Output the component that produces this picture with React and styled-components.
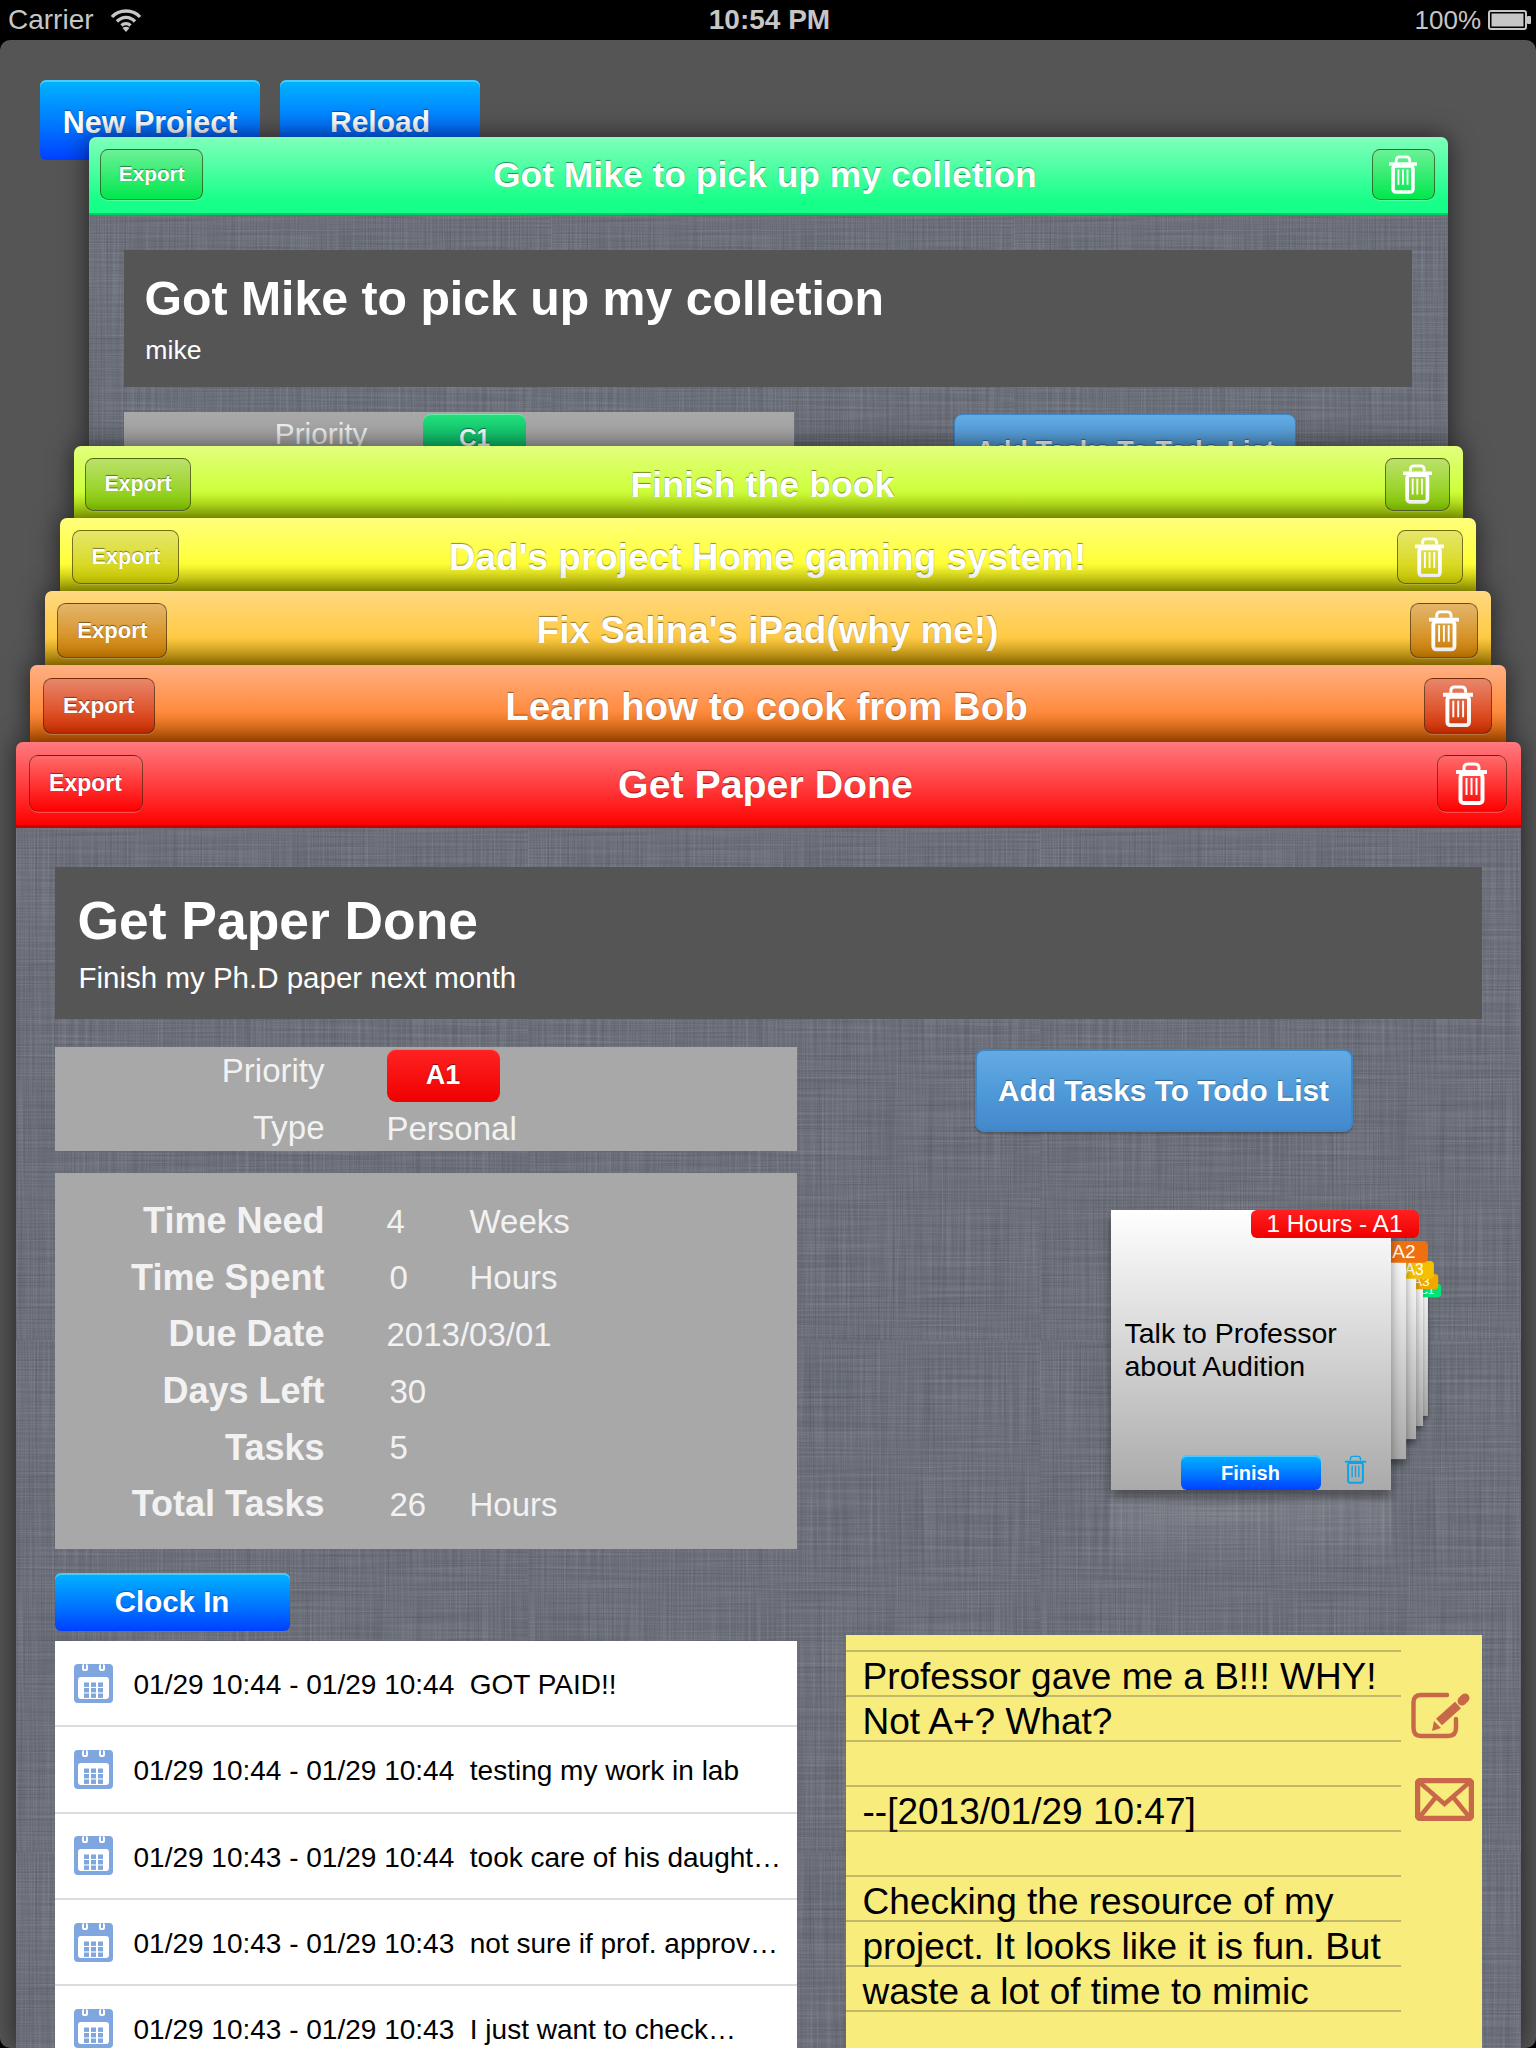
import React from "react";
import styled, { createGlobalStyle } from "styled-components";

const GlobalStyle = createGlobalStyle`
  html, body {
    margin: 0;
    height: 2048px;
    overflow: hidden;
    background: #000;
    font-family: "Liberation Sans", Arial, sans-serif;
  }
  * { box-sizing: border-box; }
`;

// textura de linho: ruido esticado nas duas direcoes
const threads = (freq, seed, rgb) =>
  `<filter id='f${seed}'><feTurbulence type='fractalNoise' baseFrequency='${freq}' numOctaves='2' seed='${seed}' stitchTiles='stitch'/><feColorMatrix values='0 0 0 0 ${rgb} 0 0 0 0 ${rgb} 0 0 0 0 ${rgb} 1.6 0 0 0 -0.62'/></filter><rect width='512' height='512' filter='url(#f${seed})' opacity='.12'/>`;
const linenSvg = `<svg xmlns='http://www.w3.org/2000/svg' width='512' height='512'>${threads(".008 .55", 3, 1)}${threads(".55 .008", 5, 1)}${threads(".008 .6", 7, 0)}${threads(".6 .008", 9, 0)}</svg>`;
const linen = `url("data:image/svg+xml,${encodeURIComponent(linenSvg)}"), #6a6e79`;

const blueButton = `
  background: linear-gradient(#00b4ff, #0078ff 55%, #0040ff);
  border: 0;
  border-radius: 6px;
  color: #fff;
  font-weight: bold;
  box-shadow: inset 0 2px 0 rgba(120, 220, 255, .6);
`;

// ---- barra de status
const StatusBar = styled.div`
  height: 40px;
  display: grid;
  grid-template-columns: 1fr auto 1fr;
  align-items: center;
  padding: 0 5px 0 8px;
  color: #c6c6c6;
  background: #000;
`;
const StatusLeft = styled.div`
  display: flex;
  align-items: center;
  gap: 16px;
  font-size: 28px;
`;
const StatusTime = styled.div`
  font-size: 28px;
  font-weight: bold;
`;
const StatusRight = styled.div`
  display: flex;
  justify-content: flex-end;
  align-items: center;
  gap: 7px;
  font-size: 26px;
`;

const Screen = styled.div`
  height: 2008px;
  background: #555;
  border-radius: 10px;
  overflow: hidden;
  display: flex;
  flex-direction: column;
`;
const Toolbar = styled.div`
  flex: none;
  height: 97px;
  padding: 40px 0 0 40px;
  display: flex;
  align-items: flex-start;
  gap: 20px;
`;
const ToolButton = styled.button`
  ${blueButton}
  width: ${(p) => p.$w}px;
  height: 80px;
  padding: 4px 0 0;
  font-family: inherit;
  font-size: ${(p) => p.$size}px;
  text-shadow: 0 -1px 1px rgba(0,0,0,.4);
`;

// ---- pilha de projetos
const Slot = styled.section`
  position: relative;
  flex: ${(p) => (p.$h ? "none" : "1")};
  height: ${(p) => (p.$h ? `${p.$h}px` : "auto")};
  min-height: 0;
  width: ${(p) => p.$w}px;
  margin: 0 auto;
  border-radius: 7px 7px 0 0;
  overflow: hidden;
  box-shadow: 0 0 26px rgba(0, 0, 0, .62);
`;
const SlotInner = styled.div`
  zoom: ${(p) => p.$zoom};
`;
const Header = styled.header`
  height: 86px;
  padding: 13px 14px 0 13px;
  display: grid;
  grid-template-columns: 1fr auto 1fr;
  align-items: start;
  background: ${(p) => p.$bg};
  border-bottom: 3px solid ${(p) => p.$line};
`;
const HeaderButton = styled.button`
  width: ${(p) => p.$w}px;
  height: 57px;
  justify-self: ${(p) => p.$side};
  padding: 0;
  display: flex;
  align-items: center;
  justify-content: center;
  border: 1.5px solid rgba(50, 40, 10, .6);
  border-radius: 9px;
  background: linear-gradient(rgba(255,255,255,.42), rgba(255,255,255,0)), ${(p) => p.$base};
  box-shadow: 0 1px 0 rgba(255,255,255,.25);
  color: #fff;
  font-family: inherit;
  font-size: 23px;
  font-weight: bold;
  text-shadow: 0 -1px 1px rgba(0,0,0,.45);
`;
const HeaderTitle = styled.h2`
  margin: 0;
  height: 57px;
  line-height: 59px;
  padding-right: ${(p) => p.$pad}px;
  font-size: ${(p) => p.$size}px;
  font-weight: bold;
  white-space: nowrap;
  color: #fff;
  text-shadow: 0 -1px 1px rgba(0,0,0,.45);
`;
const Body = styled.div`
  padding: 39px 39px 0;
  background: ${linen};
  min-height: 1400px;
`;
const TitlePanel = styled.div`
  height: 152px;
  background: #555;
  padding: 19px 23px 0;
  color: #fff;
`;
const BigTitle = styled.h1`
  margin: 0;
  font-size: 53.4px;
  line-height: 70px;
  font-weight: bold;
`;
const Subtitle = styled.div`
  padding: 4px 0 0 1px;
  font-size: 29.5px;
  line-height: 36px;
`;
const Columns = styled.div`
  margin-top: 28px;
  display: grid;
  grid-template-columns: 742px 1fr;
  column-gap: 49px;
`;
const LeftColumn = styled.div`
  display: flex;
  flex-direction: column;
`;
const RightColumn = styled.div`
  display: flex;
  flex-direction: column;
`;
const InfoPanel = styled.div`
  height: 103.5px;
  background: #a8a8a8;
  display: grid;
  grid-template-rows: 48px 46px;
  row-gap: 10px;
`;
const StatsPanel = styled.div`
  margin-top: 22px;
  height: 376.5px;
  padding-top: 20px;
  background: #a8a8a8;
  display: grid;
  grid-auto-rows: 56.6px;
`;
const FactRow = styled.div`
  display: grid;
  grid-template-columns: 270px 62px 83px 1fr;
  grid-template-rows: 100%;
  align-items: center;
  color: #f2f2f2;
  font-size: 33px;
  white-space: nowrap;
`;
const FactLabel = styled.div`
  text-align: right;
  padding-top: ${(p) => (p.$bold ? "1px" : "0")};
  font-size: ${(p) => (p.$bold ? "36px" : "33px")};
  font-weight: ${(p) => (p.$bold ? "bold" : "normal")};
`;
const FactValue = styled.div`
  grid-column: 3 / ${(p) => (p.$wide ? 6 : 4)};
  padding-top: 2px;
  padding-left: ${(p) => (p.$indent ? "3px" : "0")};
`;
const FactUnit = styled.div`
  padding-top: 2px;
`;
const PriorityBadge = styled.div`
  grid-column: 3 / 4;
  align-self: start;
  margin-top: 2px;
  width: 113px;
  height: 53px;
  line-height: 53px;
  text-align: center;
  border-radius: 9px;
  background: ${(p) => p.$bg};
  box-shadow: inset 0 1px 0 rgba(255,255,255,.35);
  color: #fff;
  font-size: 27px;
  font-weight: bold;
  text-shadow: 0 -1px 1px rgba(0,0,0,.5);
`;
const ClockInButton = styled.button`
  ${blueButton}
  margin-top: 24px;
  width: 235px;
  height: 58px;
  font-family: inherit;
  font-size: 29.5px;
  text-shadow: 0 -1px 1px rgba(0,0,0,.3);
`;
const ClockList = styled.ul`
  list-style: none;
  margin: 10px 0 0;
  padding: 0;
  background: #fff;
`;
const ClockRow = styled.li`
  height: 86.3px;
  padding: 0 19px;
  display: flex;
  align-items: center;
  gap: 21px;
  border-bottom: 2px solid #dcdcdc;
  color: #000;
  font-size: 28px;
  white-space: pre;
`;
const ClockText = styled.span`
  padding-top: 4px;
`;
const AddTasksButton = styled.button`
  margin: 2px 0 0 129px;
  width: 378px;
  height: 83px;
  border: 2px solid #3f86c6;
  border-radius: 9px;
  background: linear-gradient(#63abe3, #4f9ad9 50%, #4488cc);
  box-shadow: 0 2px 2px rgba(0,0,0,.25);
  color: #fff;
  font-family: inherit;
  font-size: 29.8px;
  font-weight: bold;
  text-shadow: 0 -1px 1px rgba(0,0,0,.35);
`;

// pilha de tarefas: cartoes sobrepostos
const TaskStack = styled.div`
  position: relative;
  height: 503px;
`;
const TaskCard = styled.div`
  position: absolute;
  left: ${(p) => p.$x}px;
  top: ${(p) => p.$y}px;
  width: 280px;
  height: 280px;
  padding: 0 14px;
  display: flex;
  align-items: center;
  transform: scale(${(p) => p.$s});
  transform-origin: 0 0;
  background: linear-gradient(#fff, #aaa);
  box-shadow: 0 8px 10px rgba(0,0,0,.4);
  color: #000;
  font-size: 28.5px;
  line-height: 33px;
`;
const TaskTag = styled.div`
  position: absolute;
  top: 0;
  right: -28px;
  width: 168px;
  height: 28px;
  line-height: 28px;
  text-align: center;
  border-radius: 6px;
  background: ${(p) => p.$bg};
  color: #fff;
  font-size: 24.5px;
  white-space: nowrap;
`;
const FinishButton = styled.button`
  ${blueButton}
  position: absolute;
  left: 70px;
  bottom: 0;
  width: 140px;
  height: 35px;
  padding: 2px 0 0;
  font-family: inherit;
  font-size: 20px;
`;
const TaskTrash = styled.div`
  position: absolute;
  left: 232px;
  top: 245px;
  color: #0aa5e8;
  display: flex;
`;
const Reflection = styled.div`
  position: absolute;
  left: ${(p) => p.$x}px;
  top: 358px;
  width: 280px;
  height: 80px;
  background: linear-gradient(rgba(255,255,255,.13), rgba(255,255,255,0));
`;

// nota amarela
const Note = styled.div`
  height: 420px;
  display: flex;
  background: #f7ec7c;
`;
const NoteText = styled.div`
  flex: none;
  width: 555px;
  padding: 19px 0 0 17px;
  background: linear-gradient(#c2b86a 2px, transparent 2px) 0 15px / 555px 45px repeat-y;
  color: #000;
  font-size: 37px;
  line-height: 45px;
  white-space: pre-line;
`;
const NoteActions = styled.div`
  padding: 57px 0 0 10px;
  display: flex;
  flex-direction: column;
  align-items: flex-start;
  gap: 39px;
  color: #c8674a;
`;
const MailWrap = styled.div`
  display: flex;
  margin-left: 4px;
`;

function WifiIcon() {
  return (
    <svg width="32" height="24" viewBox="0 0 32 24" fill="none" stroke="currentColor" strokeWidth="3.4">
      <path d="M2 9 C9 1 23 1 30 9" />
      <path d="M7 13.5 C12 8 20 8 25 13.5" />
      <path d="M11.5 17.5 C14 15 18 15 20.5 17.5" />
      <path d="M16 24 L12.5 20 C14.5 18.4 17.5 18.4 19.5 20 Z" fill="currentColor" stroke="none" />
    </svg>
  );
}

function BatteryIcon() {
  return (
    <svg width="43" height="20" viewBox="0 0 43 20">
      <rect x="1" y="1" width="37" height="18" rx="2" fill="none" stroke="#c6c6c6" strokeWidth="2" />
      <rect x="3.5" y="3.5" width="32" height="13" fill="#c6c6c6" />
      <rect x="39" y="6" width="4" height="8" rx="1" fill="#c6c6c6" />
    </svg>
  );
}

function TrashIcon({ width = 31, height = 43, sw = 4 }) {
  return (
    <svg width={width} height={height} viewBox="0 0 31 43" fill="none" stroke="currentColor">
      <path d="M8 8 V6 Q8 2 12 2 H19 Q23 2 23 6 V8" strokeWidth={sw - 1} />
      <path d="M1 10 H30" strokeWidth={sw} strokeLinecap="round" />
      <rect x="4.5" y="12" width="22" height="29" rx="3" strokeWidth={sw} />
      <path d="M10.5 16 V33 M15.5 16 V33 M20.5 16 V33" strokeWidth="2" />
    </svg>
  );
}

function CalendarIcon() {
  const dots = [];
  for (let r = 0; r < 3; r++) {
    for (let c = 0; c < 3; c++) {
      dots.push(<rect key={`${r}${c}`} x={10 + c * 7} y={18.5 + r * 5.5} width="5" height="4.4" fill="#7fa6de" />);
    }
  }
  return (
    <svg width="39" height="39" viewBox="0 0 39 39" style={{ flex: "none" }}>
      <rect x="0" y="0" width="39" height="39" rx="4" fill="#7fa6de" />
      <rect x="8" y="0" width="6" height="7" rx="2" fill="#fff" />
      <rect x="25" y="0" width="6" height="7" rx="2" fill="#fff" />
      <rect x="10" y="0" width="2" height="5" fill="#7fa6de" />
      <rect x="27" y="0" width="2" height="5" fill="#7fa6de" />
      <rect x="4" y="13" width="31" height="22" rx="3" fill="#fff" />
      {dots}
    </svg>
  );
}

function EditIcon() {
  return (
    <svg width="59" height="47" viewBox="0 0 59 47" fill="none" stroke="currentColor">
      <path d="M36 3 H10 Q2.5 3 2.5 10 V36 Q2.5 44 10 44 H37 Q45 44 45 36 V27" strokeWidth="4.4" strokeLinecap="round" />
      <path d="M47 13 L28 30" strokeWidth="9" />
      <path d="M23 29 L30 36 L21 39 Z" fill="currentColor" stroke="none" />
      <path d="M51 9 L54 6" strokeWidth="9" strokeLinecap="round" />
    </svg>
  );
}

function MailIcon() {
  return (
    <svg width="59" height="43" viewBox="0 0 59 43" fill="none" stroke="currentColor">
      <rect x="2.5" y="2.5" width="54" height="38" rx="3" strokeWidth="5.5" />
      <path d="M3 3 L29.5 26 L56 3 M3 41 L21 19 M56 41 L38 19" strokeWidth="4.5" />
    </svg>
  );
}

const clocks = [
  { hora: "01/29 10:44 - 01/29 10:44", texto: "GOT PAID!!" },
  { hora: "01/29 10:44 - 01/29 10:44", texto: "testing my work in lab" },
  { hora: "01/29 10:43 - 01/29 10:44", texto: "took care of his daught…" },
  { hora: "01/29 10:43 - 01/29 10:43", texto: "not sure if prof. approv…" },
  { hora: "01/29 10:43 - 01/29 10:43", texto: "I just want to check…" },
];

const stats = [
  { label: "Time Need", value: "4", unit: "Weeks" },
  { label: "Time Spent", value: "0", unit: "Hours", indent: true },
  { label: "Due Date", value: "2013/03/01", wide: true },
  { label: "Days Left", value: "30", indent: true },
  { label: "Tasks", value: "5", indent: true },
  { label: "Total Tasks", value: "26", unit: "Hours", indent: true },
];

const backTasks = [
  { x: 450, y: 152, s: 0.471, tag: "#00e676", label: "4 Hours - C1" },
  { x: 425, y: 142, s: 0.543, tag: "#f0a800", label: "3 Hours - A3" },
  { x: 392, y: 129, s: 0.636, tag: "#f5c000", label: "2 Hours - A3" },
  { x: 342, y: 109, s: 0.779, tag: "#f07010", label: "1 Hours - A2" },
];

const note = `Professor gave me a B!!! WHY!
Not A+? What?

--[2013/01/29 10:47]

Checking the resource of my
project. It looks like it is fun. But
waste a lot of time to mimic`;

function ProjectDetail({ projeto }) {
  return (
    <Body>
      <TitlePanel>
        <BigTitle>{projeto.titulo}</BigTitle>
        <Subtitle>{projeto.descricao}</Subtitle>
      </TitlePanel>
      <Columns>
        <LeftColumn>
          <InfoPanel>
            <FactRow>
              <FactLabel>Priority</FactLabel>
              <span />
              <PriorityBadge $bg={projeto.badge}>{projeto.prioridade}</PriorityBadge>
            </FactRow>
            <FactRow>
              <FactLabel>Type</FactLabel>
              <span />
              <FactValue $wide>Personal</FactValue>
            </FactRow>
          </InfoPanel>
          <StatsPanel>
            {stats.map((item) => (
              <FactRow key={item.label}>
                <FactLabel $bold>{item.label}</FactLabel>
                <span />
                <FactValue $wide={item.wide} $indent={item.indent}>{item.value}</FactValue>
                {item.unit && <FactUnit>{item.unit}</FactUnit>}
              </FactRow>
            ))}
          </StatsPanel>
          <ClockInButton>Clock In</ClockInButton>
          <ClockList>
            {clocks.map((item, i) => (
              <ClockRow key={i}>
                <CalendarIcon />
                <ClockText>{item.hora}  {item.texto}</ClockText>
              </ClockRow>
            ))}
          </ClockList>
        </LeftColumn>
        <RightColumn>
          <AddTasksButton>Add Tasks To Todo List</AddTasksButton>
          <TaskStack>
            <Reflection $x={265} />
            {backTasks.map((item) => (
              <TaskCard key={item.label} $x={item.x} $y={item.y} $s={item.s}>
                <TaskTag $bg={item.tag}>{item.label}</TaskTag>
              </TaskCard>
            ))}
            <TaskCard $x={265} $y={78} $s={1}>
              <div>Talk to Professor<br />about Audition</div>
              <TaskTag $bg="linear-gradient(#ff2020, #f00000)">1 Hours - A1</TaskTag>
              <FinishButton>Finish</FinishButton>
              <TaskTrash><TrashIcon width={25} height={29} sw={3} /></TaskTrash>
            </TaskCard>
          </TaskStack>
          <Note>
            <NoteText>{note}</NoteText>
            <NoteActions>
              <EditIcon />
              <MailWrap><MailIcon /></MailWrap>
            </NoteActions>
          </Note>
        </RightColumn>
      </Columns>
    </Body>
  );
}

const projetos = [
  {
    titulo: "Got Mike to pick up my colletion",
    descricao: "mike",
    prioridade: "C1",
    badge: "linear-gradient(#22e07c, #00b060)",
    w: 1359, h: 309, zoom: 0.903, tamanho: 39.3, pad: 6,
    bg: "linear-gradient(#80ffbb, #16ff88 85%)",
    line: "#00d060",
    base: "#00e84c",
    detalhe: true,
  },
  {
    titulo: "Finish the book",
    w: 1389, h: 72, zoom: 0.923, tamanho: 38.7, pad: 11,
    bg: "linear-gradient(#e2ff7c, #ceff3a 60%, #a4c800 94%)",
    line: "#a4c800",
    base: "#88cc00",
  },
  {
    titulo: "Dad's project Home gaming system!",
    w: 1416, h: 73, zoom: 0.941, tamanho: 39.3, pad: 0,
    bg: "linear-gradient(#ffff7c, #ffff38 58%, #bcbc00 92%)",
    line: "#bcbc00",
    base: "#d4d400",
  },
  {
    titulo: "Fix Salina's iPad(why me!)",
    w: 1446, h: 74, zoom: 0.961, tamanho: 38.4, pad: 0,
    bg: "linear-gradient(#ffd880, #ffca44 58%, #bc8e00 92%)",
    line: "#bc8e00",
    base: "#d08000",
  },
  {
    titulo: "Learn how to cook from Bob",
    w: 1476, h: 77, zoom: 0.981, tamanho: 39.3, pad: 2,
    bg: "linear-gradient(#ffb084, #ff8c40 56%, #d05c00 93%)",
    line: "#d05c00",
    base: "#d83000",
  },
  {
    titulo: "Get Paper Done",
    descricao: "Finish my Ph.D paper next month",
    prioridade: "A1",
    badge: "linear-gradient(#ff2222, #f00000)",
    w: 1505, zoom: 1, tamanho: 39.3, pad: 4,
    bg: "linear-gradient(#ff7a80, #ff2a2a 68%, #ff0000)",
    line: "#c80000",
    base: "#ff0000",
    detalhe: true,
  },
];

export default function App() {
  return (
    <>
      <GlobalStyle />
      <StatusBar>
        <StatusLeft>
          <span>Carrier</span>
          <WifiIcon />
        </StatusLeft>
        <StatusTime>10:54 PM</StatusTime>
        <StatusRight>
          <span>100%</span>
          <BatteryIcon />
        </StatusRight>
      </StatusBar>
      <Screen>
        <Toolbar>
          <ToolButton $w={220} $size={30.5}>New Project</ToolButton>
          <ToolButton $w={200} $size={30}>Reload</ToolButton>
        </Toolbar>
        {projetos.map((item) => (
          <Slot key={item.titulo} $w={item.w} $h={item.h}>
            <SlotInner $zoom={item.zoom}>
              <Header $bg={item.bg} $line={item.line}>
                <HeaderButton $w={114} $side="start" $base={item.base}>Export</HeaderButton>
                <HeaderTitle $size={item.tamanho} $pad={item.pad}>{item.titulo}</HeaderTitle>
                <HeaderButton $w={70} $side="end" $base={item.base}><TrashIcon /></HeaderButton>
              </Header>
              {item.detalhe && <ProjectDetail projeto={item} />}
            </SlotInner>
          </Slot>
        ))}
      </Screen>
    </>
  );
}
